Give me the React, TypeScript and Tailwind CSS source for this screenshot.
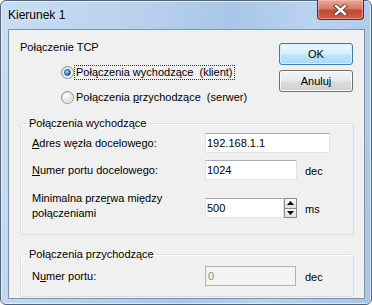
import React from "react";

const FONT = "font-['Liberation_Sans',Arial,sans-serif]";

function Radio({ checked }: { checked?: boolean }) {
  return (
    <span className="flex h-[13px] w-[13px] shrink-0 items-center justify-center rounded-full border border-[#8e8f8f] bg-[linear-gradient(135deg,#dcdcdc,#ffffff)]">
      {checked ? (
        <span className="h-[7px] w-[7px] rounded-full border border-[#1a4d8a] bg-[radial-gradient(circle_at_35%_30%,#b9e2fc,#3b86d0_55%,#17488a)]" />
      ) : (
        <span className="h-[9px] w-[9px] rounded-full bg-[radial-gradient(circle_at_35%_30%,#ffffff,#e3e3e3_60%,#cfcfcf)]" />
      )}
    </span>
  );
}

function TextBox({ value, w, disabled }: { value: string; w: string; disabled?: boolean }) {
  return (
    <div
      className={
        disabled
          ? `${w} flex h-[20px] items-center border border-[#adb2b5] bg-[#f4f4f4] pl-[2px] text-[#8a8a8a]`
          : `${w} flex h-[20px] items-center border border-[#e2e3ea] border-t-[#abadb3] bg-white pl-[1px] text-black`
      }
    >
      {value}
    </div>
  );
}

function Spinner() {
  return (
    <div className="flex h-[20px] w-[13px] flex-col border border-[#8a8a8a] bg-[#f0f0f0]">
      <div className="flex flex-1 items-center justify-center border-b border-[#8a8a8a] bg-[linear-gradient(#fafafa,#dedede)]">
        <svg width="7" height="4" viewBox="0 0 7 4">
          <path d="M0 4 L3.5 0 L7 4 Z" fill="#000" />
        </svg>
      </div>
      <div className="flex flex-1 items-center justify-center bg-[linear-gradient(#fafafa,#dedede)]">
        <svg width="7" height="4" viewBox="0 0 7 4">
          <path d="M0 0 L3.5 4 L7 0 Z" fill="#000" />
        </svg>
      </div>
    </div>
  );
}

function Group({ title, className, children }: { title: string; className: string; children: React.ReactNode }) {
  return (
    <fieldset className={`${className} ml-[11px] mr-[10px] rounded-[3px] border border-[#d5dfe5] px-[6px] shadow-[inset_1px_1px_0_#ffffff]`}>
      <legend className="px-[2px] leading-[13px]">{title}</legend>
      {children}
    </fieldset>
  );
}

export default function App() {
  return (
    <div
      className={`${FONT} flex h-[305px] w-[372px] flex-col rounded-[6px] border border-[#4d6580] bg-[linear-gradient(100deg,#c9ddf3_0%,#b7d0ec_35%,#a9c6e8_55%,#bad3ef_75%,#a8c4e6_100%)] text-[11px] text-black shadow-[inset_0_0_0_1px_rgba(255,255,255,0.6)]`}
    >
      {/* title bar */}
      <div className="flex h-[28px] shrink-0 justify-between">
        <span className="self-center pl-[7px] text-[12px] [text-shadow:0_0_6px_rgba(255,255,255,0.95)]">
          Kierunek 1
        </span>
        <div className="-mt-[1px] mr-[7px] flex h-[20px] w-[47px] items-center justify-center rounded-b-[4px] border border-t-0 border-[#6b2219] bg-[linear-gradient(#e9a99a_0%,#d67a68_45%,#c24a34_55%,#d0604a_100%)] shadow-[inset_0_0_0_1px_rgba(255,200,190,0.5)]">
          <svg width="15" height="12" viewBox="0 0 15 12">
            <path d="M3 2 L12 10 M12 2 L3 10" stroke="#4b3a38" strokeWidth="4.2" strokeLinecap="square" />
            <path d="M3 2 L12 10 M12 2 L3 10" stroke="#ffffff" strokeWidth="2.4" strokeLinecap="square" />
          </svg>
        </div>
      </div>

      {/* client area */}
      <div className="ml-[7px] mr-[6px] flex h-[270px] flex-col border border-[#7d93ab] bg-[#f0f0f0]">
        <div className="flex h-[87px] shrink-0 justify-between">
          <div className="flex flex-col pl-[11px]">
            <div className="mt-[11px] leading-[13px]">Połączenie TCP</div>
            <div className="ml-[41px] mt-[12px] flex h-[13px] items-center">
              <Radio checked />
              <span className="border border-dotted border-[#333] px-[1px] leading-[13px]">
                Połączenia wychodzące&nbsp; (klient)
              </span>
            </div>
            <div className="ml-[41px] mt-[12px] flex h-[13px] items-center">
              <Radio />
              <span className="pl-[2px] leading-[13px]">
                Połączenia <u>p</u>rzychodzące&nbsp; (serwer)
              </span>
            </div>
          </div>
          <div className="mr-[11px] mt-[13px] flex w-[74px] flex-col gap-[5px]">
            <div className="flex h-[22px] items-center justify-center rounded-[3px] border border-[#3c7fb1] bg-[linear-gradient(#eaf6fd_0%,#d9f0fc_45%,#bee6fd_55%,#a7d9f5_100%)] shadow-[inset_0_0_0_1px_#d8f0fd]">
              OK
            </div>
            <div className="flex h-[22px] items-center justify-center rounded-[3px] border border-[#707070] bg-[linear-gradient(#f2f2f2_0%,#ebebeb_45%,#dddddd_55%,#cfcfcf_100%)] shadow-[inset_0_0_0_1px_#fcfcfc]">
              Anuluj
            </div>
          </div>
        </div>

        <Group title="Połączenia wychodzące" className="pb-[9px] pt-[3px]">
          <div className="flex flex-col pl-[5px]">
            <div className="flex items-center">
              <span className="w-[173px] leading-[13px]">
                <u>A</u>dres węzła docelowego:
              </span>
              <TextBox value="192.168.1.1" w="w-[125px]" />
            </div>
            <div className="mt-[7px] flex items-center">
              <span className="w-[173px] leading-[13px]">
                <u>N</u>umer portu docelowego:
              </span>
              <TextBox value="1024" w="w-[92px]" />
              <span className="ml-[8px] mt-[3px]">dec</span>
            </div>
            <div className="mt-[11px] flex items-center">
              <span className="mb-[4px] w-[173px] leading-[15px]">
                Minimalna prze<u>r</u>wa między
                <br />
                połączeniami
              </span>
              <TextBox value="500" w="w-[79px]" />
              <Spinner />
              <span className="ml-[8px] mt-[3px]">ms</span>
            </div>
          </div>
        </Group>

        <Group title="Połączenia przychodzące" className="mt-[13px] pb-[10px] pt-[5px]">
          <div className="flex items-center pl-[5px]">
            <span className="w-[173px] leading-[13px]">
              N<u>u</u>mer portu:
            </span>
            <TextBox value="0" w="w-[91px]" disabled />
            <span className="ml-[9px] mt-[3px]">dec</span>
          </div>
        </Group>
      </div>
    </div>
  );
}
